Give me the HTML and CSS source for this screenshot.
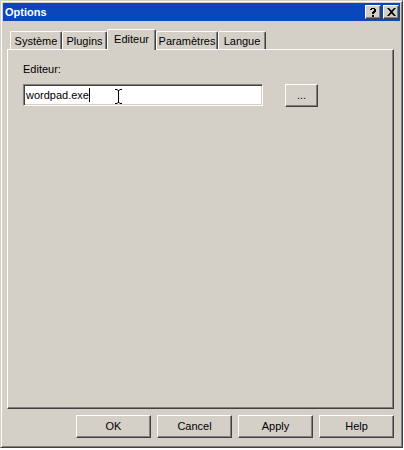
FILE: index.html
```html
<!DOCTYPE html>
<html>
<head>
<meta charset="utf-8">
<link rel="stylesheet" href="styles.css">
</head>
<body>
<div class="window">
  <div class="titlebar">
    <span class="title">Options</span>
    <div class="tbtns">
      <div class="tbtn">
        <svg width="8" height="9" viewBox="0 0 8 9"><path d="M1 1h1V0h4v1h1v3H6v1H5v1H3V4h1V3h1V1H3v1H1z M3 7h2v2H3z" fill="#000"/></svg>
      </div>
      <div class="tbtn">
        <svg width="9" height="8" viewBox="0 0 9 8"><path d="M0 0h2l2.5 2.5L7 0h2L5.5 4 9 8H7L4.5 5.5 2 8H0l3.5-4z" fill="#000"/></svg>
      </div>
    </div>
  </div>
  <div class="body">
    <div class="tabs">
      <div class="tab w1">Système</div>
      <div class="tab w2">Plugins</div>
      <div class="tab sel w3">Editeur</div>
      <div class="tab w4">Paramètres</div>
      <div class="tab w5">Langue</div>
    </div>
    <div class="panel">
      <div class="label">Editeur:</div>
      <div class="row">
        <div class="input"><span class="val">wordpad.exe</span><span class="caret"></span></div>
        <div class="btn small">...</div>
      </div>
    </div>
    <div class="buttons">
      <div class="btn">OK</div>
      <div class="btn">Cancel</div>
      <div class="btn">Apply</div>
      <div class="btn">Help</div>
    </div>
  </div>
  <svg class="ibeam" width="7" height="15" viewBox="0 0 7 15"><path d="M0 0.5h2.5M4.5 0.5H7M2.5 1.5h2M3.5 1.5v12M2.5 13.5h2M0 14.5h2.5M4.5 14.5H7" stroke="#000" stroke-width="1" fill="none"/></svg>
</div>
</body>
</html>
```
FILE: styles.css
```css
html, body {
  margin: 0;
  padding: 0;
  background: #ffffff;
}
body {
  width: 404px;
  height: 450px;
  overflow: hidden;
  font-family: "Liberation Sans", Arial, sans-serif;
  font-size: 11px;
  color: #000;
}
.window {
  position: relative;
  width: 403px;
  height: 448px;
  box-sizing: border-box;
  background: #d4d0c8;
  border: 1px solid;
  border-color: #d4d0c8 #404040 #404040 #d4d0c8;
  box-shadow: inset 1px 1px #fff, inset -1px -1px #808080;
  padding: 2px;
  display: flex;
  flex-direction: column;
}
.titlebar {
  height: 18px;
  background: #0a46bc;
  display: flex;
  align-items: center;
  justify-content: space-between;
  padding-left: 2px;
}
.title {
  color: #fff;
  font-weight: bold;
  font-size: 11px;
  line-height: 13px;
}
.tbtns {
  display: flex;
  gap: 2px;
  margin-right: 1px;
}
.tbtn {
  width: 16px;
  height: 14px;
  box-sizing: border-box;
  background: #d4d0c8;
  border: 1px solid;
  border-color: #fff #404040 #404040 #fff;
  box-shadow: inset -1px -1px #808080;
  display: flex;
  align-items: center;
  justify-content: center;
}
.body {
  flex: 1;
  display: flex;
  flex-direction: column;
  padding: 8px 0 0 4px;
}
.tabs {
  display: flex;
  align-items: flex-end;
  height: 20px;
  padding-left: 3px;
  position: relative;
  z-index: 1;
}
.tab {
  height: 18px;
  box-sizing: border-box;
  border: 1px solid;
  border-color: #fff #404040 transparent #fff;
  border-bottom: none;
  border-top-left-radius: 2px;
  border-top-right-radius: 2px;
  box-shadow: inset -1px 0 #808080;
  display: flex;
  align-items: center;
  justify-content: center;
  line-height: 13px;
  padding-top: 1px;
}
.tab.sel {
  height: 21px;
  margin-bottom: -1px;
  background: #d4d0c8;
  padding-top: 0;
  padding-bottom: 2px;
}
.w1 { width: 52px; }
.w2 { width: 45px; }
.w3 { width: 49px; }
.w4 { width: 62px; }
.w5 { width: 48px; }
.panel {
  width: 387px;
  height: 360px;
  box-sizing: border-box;
  border: 1px solid;
  border-color: #fff #404040 #404040 #fff;
  box-shadow: inset -1px -1px #808080;
  padding: 13px 15px 0 15px;
}
.label {
  line-height: 13px;
  margin-bottom: 8px;
}
.row {
  display: flex;
  align-items: flex-start;
  gap: 22px;
}
.input {
  width: 240px;
  height: 22px;
  box-sizing: border-box;
  background: #fff;
  border: 1px solid;
  border-color: #808080 #fff #fff #808080;
  box-shadow: inset 1px 1px #404040, inset -1px -1px #d4d0c8;
  display: flex;
  align-items: center;
  padding-left: 2px;
}
.val {
  line-height: 13px;
}
.caret {
  width: 1px;
  height: 14px;
  background: #000;
  margin-left: 0;
}
.btn {
  width: 75px;
  height: 23px;
  box-sizing: border-box;
  background: #d4d0c8;
  border: 1px solid;
  border-color: #fff #404040 #404040 #fff;
  box-shadow: inset -1px -1px #808080;
  display: flex;
  align-items: center;
  justify-content: center;
  line-height: 13px;
}
.btn.small {
  width: 33px;
}
.buttons {
  display: flex;
  justify-content: flex-end;
  gap: 6px;
  margin-top: 6px;
  padding-right: 6px;
}
.ibeam {
  position: absolute;
  left: 114px;
  top: 88px;
}
```
